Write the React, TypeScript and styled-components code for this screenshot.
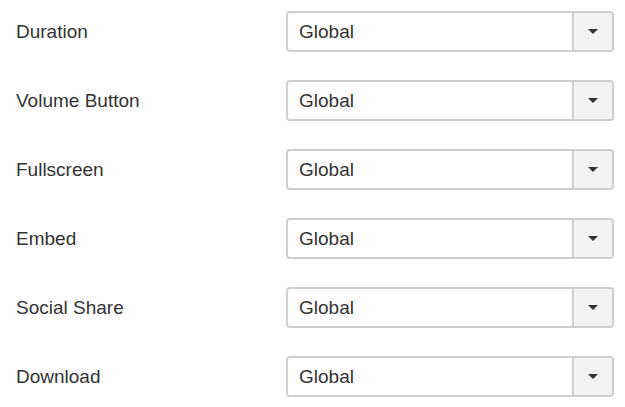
import React from "react";
import styled, { createGlobalStyle } from "styled-components";

const GlobalStyle = createGlobalStyle`
	body {
		margin: 0;
		background: #fff;
		font-family: "Liberation Sans", Arial, sans-serif;
		color: #333;
	}
`;

const settings = ["Duration", "Volume Button", "Fullscreen", "Embed", "Social Share", "Download"];

export default function App() {
	return (
		<>
			<GlobalStyle />
			<StyledForm>
				{settings.map((label) => (
					<StyledRow key={label}>
						<StyledLabel>{label}</StyledLabel>
						<StyledSelect>
							<StyledValue>Global</StyledValue>
							<StyledToggle>
								<StyledCaret />
							</StyledToggle>
						</StyledSelect>
					</StyledRow>
				))}
			</StyledForm>
		</>
	);
}

const StyledForm = styled.div`
	display: flex;
	flex-direction: column;
	gap: 28px;
	padding: 11px 0 0 16px;
`;

const StyledRow = styled.div`
	display: grid;
	grid-template-columns: 270px 328px;
	align-items: center;
	height: 41px;
`;

const StyledLabel = styled.label`
	font-size: 19px;
	color: #333;
`;

const StyledSelect = styled.div`
	display: flex;
	height: 41px;
	box-sizing: border-box;
	border: 2px solid #cfcfcf;
	border-radius: 4px;
	overflow: hidden;
	background: #fff;
`;

const StyledValue = styled.div`
	flex: 1;
	display: flex;
	align-items: center;
	padding-left: 11px;
	font-size: 19px;
	color: #333;
`;

const StyledToggle = styled.div`
	width: 38px;
	display: flex;
	align-items: center;
	justify-content: center;
	background: #f2f2f2;
	border-left: 2px solid #cfcfcf;
`;

const StyledCaret = styled.span`
	width: 0;
	height: 0;
	border-left: 5px solid transparent;
	border-right: 5px solid transparent;
	border-top: 5px solid #333;
`;
